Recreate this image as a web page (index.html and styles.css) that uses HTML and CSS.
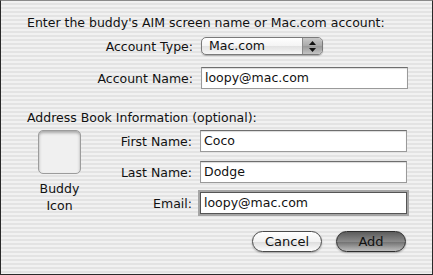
FILE: index.html
```html
<!DOCTYPE html>
<html lang="en">
<head>
    <meta charset="UTF-8">
    <title>Add Buddy</title>
    <link rel="stylesheet" href="styles.css">
</head>
<body>
    <div class="sheet">
        <p class="prompt">Enter the buddy's AIM screen name or Mac.com account:</p>

        <!-- Account rows -->
        <div class="rows account">
            <label class="label">Account Type:</label>
            <div class="popup">
                <span class="popup-value">Mac.com</span>
                <span class="popup-arrows">
                    <svg width="7" height="11" viewBox="0 0 7 11">
                        <path d="M3.5 0 L7 4 L0 4 Z" fill="#111"/>
                        <path d="M0 7 L7 7 L3.5 11 Z" fill="#111"/>
                    </svg>
                </span>
            </div>

            <label class="label">Account Name:</label>
            <div class="field">loopy@mac.com</div>
        </div>

        <p class="prompt section">Address Book Information (optional):</p>

        <div class="address">
            <div class="buddy">
                <div class="well"></div>
                <div class="buddy-caption">Buddy<br>Icon</div>
            </div>

            <div class="rows person">
                <label class="label">First Name:</label>
                <div class="field">Coco</div>

                <label class="label">Last Name:</label>
                <div class="field">Dodge</div>

                <label class="label">Email:</label>
                <div class="field focused">loopy@mac.com</div>
            </div>
        </div>

        <div class="actions">
            <button type="button" class="btn">Cancel</button>
            <button type="button" class="btn default">Add</button>
        </div>
    </div>
</body>
</html>
```

FILE: styles.css
```css
body {
    margin: 0;
    font-family: 'DejaVu Sans', 'Liberation Sans', sans-serif;
    font-size: 12.5px;
    color: #111;
}

.sheet {
    width: 433px;
    height: 275px;
    box-sizing: border-box;
    border: 1px solid #2a2a2a;
    border-top-color: #8a8a8a;
    padding: 14px 25px 0 26px;
    background: repeating-linear-gradient(to bottom, #f1f1f1 0, #f1f1f1 2px, #e3e3e3 2px, #e3e3e3 4px);
}

.prompt {
    margin: 0;
    line-height: 16px;
}

.prompt.section {
    margin-top: 21px;
}

.rows {
    display: grid;
    grid-template-columns: 166px 207px;
    column-gap: 8px;
    align-items: center;
}

.label {
    text-align: right;
}

/* popup menu */
.popup {
    width: 122px;
    height: 18px;
    box-sizing: border-box;
    border: 1px solid #7a7a7a;
    border-radius: 5px;
    display: flex;
    overflow: hidden;
    background: linear-gradient(to bottom, #ffffff, #f4f4f4 50%, #e2e2e2 51%, #f6f6f6);
    box-shadow: 0 1px 1px rgba(0, 0, 0, 0.25);
}

.popup-value {
    flex: 1;
    padding-left: 7px;
    line-height: 16px;
}

.popup-arrows {
    width: 19px;
    display: flex;
    align-items: center;
    justify-content: center;
    border-left: 1px solid #8a8a8a;
    background: linear-gradient(to bottom, #c8c8c8, #a9a9a9 50%, #999 51%, #c4c4c4);
}

/* text fields */
.field {
    height: 22px;
    box-sizing: border-box;
    border: 1px solid #9a9a9a;
    border-top-color: #6e6e6e;
    background: #fff;
    box-shadow: inset 0 1px 1px rgba(0, 0, 0, 0.15);
    padding-left: 3px;
    line-height: 20px;
}

.field.focused {
    border-color: #555;
    box-shadow: 0 0 0 2px #a5a5a5;
}

.account {
    margin-top: 6px;
    row-gap: 12px;
}

.address {
    display: flex;
    margin-top: 4px;
}

.buddy {
    width: 66px;
    display: flex;
    flex-direction: column;
    align-items: center;
}

.well {
    width: 43px;
    height: 44px;
    box-sizing: border-box;
    border: 1px solid #9c9c9c;
    border-radius: 5px;
    background: #f0f0f0;
    box-shadow: inset 0 2px 3px rgba(0, 0, 0, 0.3);
}

.buddy-caption {
    margin-top: 6px;
    text-align: center;
    line-height: 17px;
}

.person {
    grid-template-columns: 100px 207px;
    row-gap: 9px;
}

/* buttons */
.actions {
    display: flex;
    justify-content: flex-end;
    gap: 14px;
    margin-top: 17px;
    padding-right: 1px;
}

.btn {
    width: 70px;
    height: 21px;
    border: 1px solid #4a4a4a;
    border-radius: 11px;
    font: inherit;
    font-size: 13px;
    color: #111;
    padding: 0;
    background: linear-gradient(to bottom, #ffffff, #f2f2f2 50%, #dcdcdc 51%, #fdfdfd);
    box-shadow: 0 1px 2px rgba(0, 0, 0, 0.3);
}

.btn.default {
    border-color: #2e2e2e;
    background: linear-gradient(to bottom, #5c5c5c, #8a8a8a 50%, #6f6f6f 51%, #bdbdbd);
}
```
